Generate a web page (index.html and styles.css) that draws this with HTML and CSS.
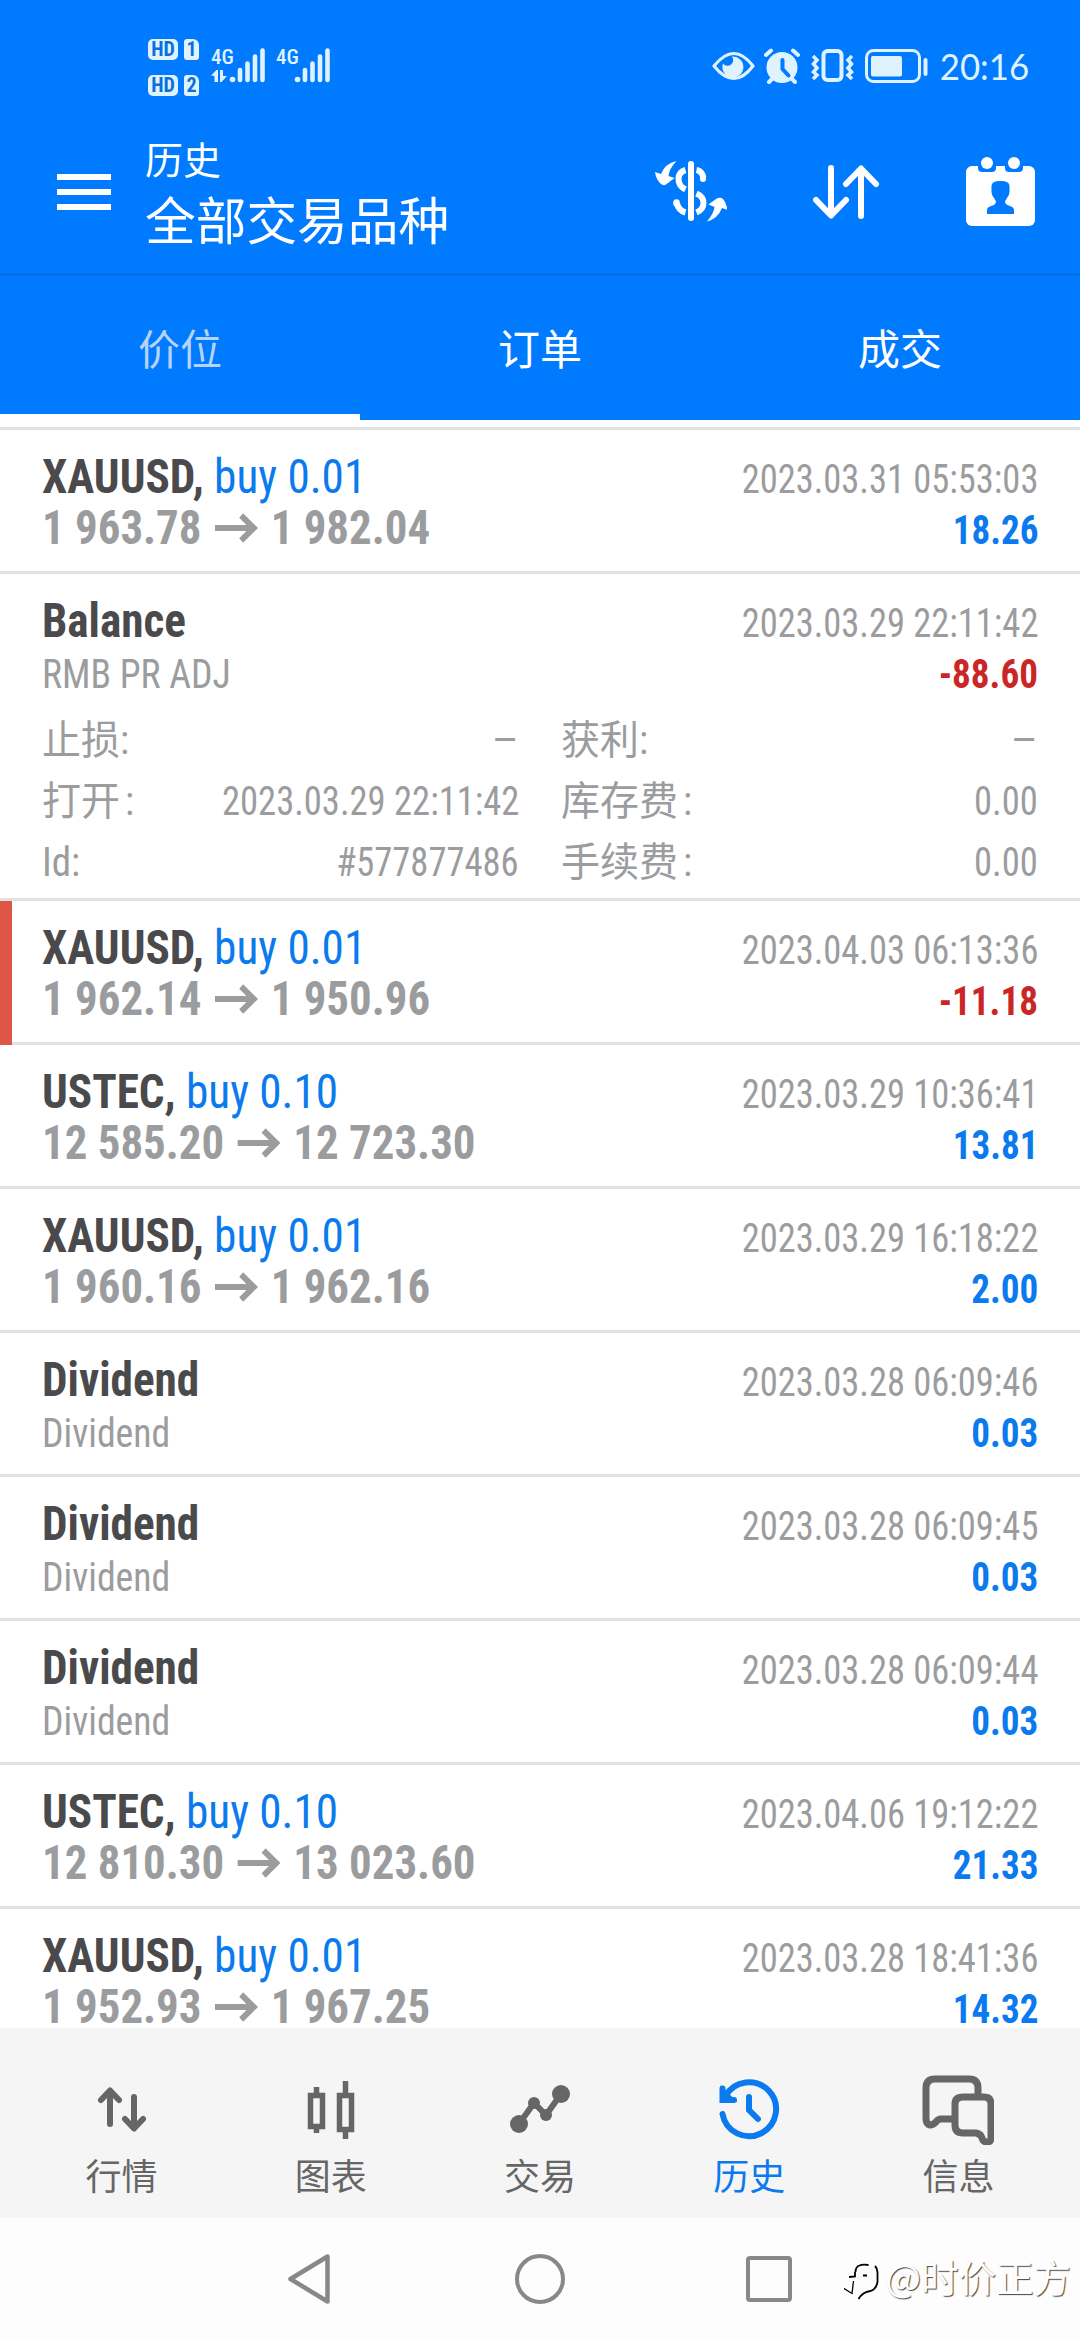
FILE: index.html
```html
<!DOCTYPE html>
<html lang="zh-CN">
<head>
<meta charset="utf-8">
<title>历史</title>
<link rel="stylesheet" href="styles.css">
</head>
<body>
<div class="screen">
  <header class="header">
    <div class="status">
      <div class="sims">
        <div class="sim"><span class="hd">HD</span><span class="slot">1</span></div>
        <div class="sim"><span class="hd">HD</span><span class="slot">2</span></div>
      </div>
      <div class="signal">
        <span class="net">4G</span>
        <svg width="56" height="36" viewBox="0 0 56 36"><g fill="#dff3ff"><path d="M0 27.500l5.500-5.500h1.500v12H3.500v-6zM9 22h3v6h4l-5.500 6H9z"/><circle cx="21.500" cy="31.500" r="2.800"/></g><path d="M29 22v10M36.500 15.500V32M44 8.500V32M51.500 2.500V32" stroke="#dff3ff" stroke-width="4.600" stroke-linecap="round"/></svg>
      </div>
      <div class="signal second">
        <span class="net">4G</span>
        <svg width="56" height="36" viewBox="0 0 56 36"><circle cx="21.500" cy="31.500" r="2.800" fill="#dff3ff"/><path d="M29 22v10M36.500 15.500V32M44 8.500V32M51.500 2.500V32" stroke="#dff3ff" stroke-width="4.600" stroke-linecap="round"/></svg>
      </div>
      <div class="indicators">
        <svg class="sys" width="220" height="36" viewBox="0 0 220 36" fill="none" stroke="#dff3ff">
          <path d="M2 18Q22-7 41 18Q22 43 2 18Z" stroke-width="3.200" stroke-linejoin="round"/>
          <path d="M20 8.500a10.500 10.500 0 1 1-9 7a5.500 5.500 0 0 0 9-7z" fill="#dff3ff" stroke="none"/>
          <circle cx="70" cy="19.500" r="15.500" fill="#dff3ff" stroke="none"/>
          <path d="M54 7l5-4.500M86 7l-5-4.500M60 31l-3 3M80 31l3 3" stroke-width="4" stroke-linecap="round"/>
          <path d="M70.500 12v9l6 6.500" stroke="#007aff" stroke-width="4" stroke-linecap="round"/>
          <rect x="111.500" y="3" width="18" height="29" rx="4" stroke-width="4"/>
          <path d="M101 8l4 4-3.500 4 3.500 4-3.500 4 3.500 3-4 4M140 8l-4 4 3.500 4-3.500 4 3.500 4-3.500 3 4 4" stroke-width="3.500"/>
          <rect x="154.500" y="2.500" width="53" height="31" rx="7" stroke-width="3"/>
          <rect x="159" y="8" width="31" height="20.500" rx="2" fill="#dff3ff" stroke="none"/>
          <path d="M213.500 12v14" stroke-width="4" stroke-linecap="round"/>
        </svg>
        <span class="clock">20:16</span>
      </div>
    </div>
    <div class="bar">
      <svg class="menu" width="54" height="36" viewBox="0 0 54 36" fill="#fff"><path d="M0 0h54v6H0zM0 15h54v6H0zM0 30h54v6H0z"/></svg>
      <div class="titles"><div class="subtitle">历史</div><div class="title">全部交易品种</div></div>
      <div class="actions">
        <svg width="72" height="61" viewBox="0 0 72 61" fill="none" stroke="#fff">
          <path d="M36 3v54" stroke-width="6" stroke-linecap="round"/>
          <path d="M30.500 9q-7 2-7 9t7 10.500M41.500 9q5.500 1 7 7.500" stroke-width="6"/><path d="M48 17v1" stroke-width="6" stroke-linecap="round"/>
          <path d="M41.500 32.500q7 3 7 9.500t-7 9.500M30.500 51.500q-7-2-8.500-9" stroke-width="6"/><path d="M21.500 42.500v-1" stroke-width="6.500" stroke-linecap="round"/>
          <path d="M21.500 0Q14 8 13.500 15L19.500 17L11 23.500Q8.500 25 6 23Q1 18.500 0 11L6 13Q10 2.500 21.500 0Z" fill="#fff" stroke="none"/>
          <path d="M52 60.500Q59 52 59.500 46L53.500 43.500L61 38Q65 35.500 68 38Q71.500 41.500 72.500 49L67 47Q63 57.500 52 60.500Z" fill="#fff" stroke="none"/>
        </svg>
        <svg class="sort" width="66" height="54" viewBox="0 0 66 54" fill="none" stroke="#fff" stroke-width="6" stroke-linecap="round" stroke-linejoin="round"><path d="M18 3v46M3 35l15 15.500L33 35M48 51V5M33 19L48 3.500 63 19"/></svg>
        <svg width="69" height="69" viewBox="0 0 69 69"><rect y="9" width="69" height="60" rx="6" fill="#fff"/><path d="M12 8h18v3q0 4-4 4H16q-4 0-4-4zM39 8h18v3q0 4-4 4H43q-4 0-4-4z" fill="#007aff"/><circle cx="21" cy="6" r="6" fill="#fff"/><circle cx="48" cy="6" r="6" fill="#fff"/><path d="M25.500 29q0-5 9-5t9 5v6q0 3-2.500 6l-2 3.500q0 3 5 4.500 4 1.500 4 4V57H21v-4q0-2.500 4-4 5-1.500 5-4.500L28 41q-2.500-3-2.500-6z" fill="#007aff"/></svg>
      </div>
    </div>
    <nav class="tabs"><a class="tab on">价位</a><a class="tab">订单</a><a class="tab">成交</a></nav>
  </header>

  <main class="list">
    <section class="row"><div class="line"><div class="name">XAUUSD, <span class="side">buy 0.01</span></div><time>2023.03.31 05:53:03</time></div><div class="line"><div class="price">1 963.78<svg class="arrow" viewBox="0 0 46 30"><path d="M0 15h41M28 2.500L41.500 15 28 27.500"/></svg>1 982.04</div><div class="sum">18.26</div></div></section>
    <section class="row"><div class="line"><div class="name">Balance</div><time>2023.03.29 22:11:42</time></div><div class="line"><div class="note">RMB PR ADJ</div><div class="sum loss">-88.60</div></div>
      <dl class="details">
        <div><dt>止损:</dt><dd class="dash">–</dd></div><div><dt>获利:</dt><dd class="dash">–</dd></div>
        <div><dt>打开<span class="colon">:</span></dt><dd>2023.03.29 22:11:42</dd></div><div><dt>库存费<span class="colon">:</span></dt><dd>0.00</dd></div>
        <div><dt>Id:</dt><dd>#577877486</dd></div><div><dt>手续费<span class="colon">:</span></dt><dd>0.00</dd></div>
      </dl></section>
    <section class="row marked"><div class="line"><div class="name">XAUUSD, <span class="side">buy 0.01</span></div><time>2023.04.03 06:13:36</time></div><div class="line"><div class="price">1 962.14<svg class="arrow" viewBox="0 0 46 30"><path d="M0 15h41M28 2.500L41.500 15 28 27.500"/></svg>1 950.96</div><div class="sum loss">-11.18</div></div></section>
    <section class="row"><div class="line"><div class="name">USTEC, <span class="side">buy 0.10</span></div><time>2023.03.29 10:36:41</time></div><div class="line"><div class="price">12 585.20<svg class="arrow" viewBox="0 0 46 30"><path d="M0 15h41M28 2.500L41.500 15 28 27.500"/></svg>12 723.30</div><div class="sum">13.81</div></div></section>
    <section class="row"><div class="line"><div class="name">XAUUSD, <span class="side">buy 0.01</span></div><time>2023.03.29 16:18:22</time></div><div class="line"><div class="price">1 960.16<svg class="arrow" viewBox="0 0 46 30"><path d="M0 15h41M28 2.500L41.500 15 28 27.500"/></svg>1 962.16</div><div class="sum">2.00</div></div></section>
    <section class="row"><div class="line"><div class="name">Dividend</div><time>2023.03.28 06:09:46</time></div><div class="line"><div class="note">Dividend</div><div class="sum">0.03</div></div></section>
    <section class="row"><div class="line"><div class="name">Dividend</div><time>2023.03.28 06:09:45</time></div><div class="line"><div class="note">Dividend</div><div class="sum">0.03</div></div></section>
    <section class="row"><div class="line"><div class="name">Dividend</div><time>2023.03.28 06:09:44</time></div><div class="line"><div class="note">Dividend</div><div class="sum">0.03</div></div></section>
    <section class="row"><div class="line"><div class="name">USTEC, <span class="side">buy 0.10</span></div><time>2023.04.06 19:12:22</time></div><div class="line"><div class="price">12 810.30<svg class="arrow" viewBox="0 0 46 30"><path d="M0 15h41M28 2.500L41.500 15 28 27.500"/></svg>13 023.60</div><div class="sum">21.33</div></div></section>
    <section class="row"><div class="line"><div class="name">XAUUSD, <span class="side">buy 0.01</span></div><time>2023.03.28 18:41:36</time></div><div class="line"><div class="price">1 952.93<svg class="arrow" viewBox="0 0 46 30"><path d="M0 15h41M28 2.500L41.500 15 28 27.500"/></svg>1 967.25</div><div class="sum">14.32</div></div></section>
  </main>

  <nav class="bottom">
    <a class="item"><svg width="72" height="72" viewBox="0 0 72 72" fill="none" stroke="#666" stroke-width="6" stroke-linecap="round" stroke-linejoin="round"><path d="M24 51V20M15 27l9-9.500L33 27M48 24v31M39 46l9 9.500L57 46"/></svg>行情</a>
    <a class="item"><svg width="72" height="72" viewBox="0 0 72 72" fill="none" stroke="#666" stroke-width="5.500"><path d="M15.500 22.500h12v31h-12zM44.500 22.500h12v34h-12zM21.500 14v8M21.500 54v6M50.500 8v14M50.500 57v9"/></svg>图表</a>
    <a class="item"><svg width="72" height="72" viewBox="0 0 72 72" fill="#666"><circle cx="15" cy="51" r="9"/><circle cx="57" cy="21" r="9"/><circle cx="30" cy="30" r="6"/><circle cx="42" cy="42" r="6"/><path d="M15 51L30 30l12 12L57 21" fill="none" stroke="#666" stroke-width="6"/></svg>交易</a>
    <a class="item active"><svg width="72" height="72" viewBox="0 0 72 72" fill="none" stroke="#0a7aee" stroke-width="6" stroke-linecap="round"><path d="M9.500 41A27 27 0 1 0 12.500 23M9.500 15.500v11.500H21M36 24v13l9 9"/><path d="M9.500 17v10h10z" fill="#0a7aee" stroke-width="4"/></svg>历史</a>
    <a class="item"><svg width="72" height="72" viewBox="0 0 72 72" fill="none" stroke="#666" stroke-width="7" stroke-linejoin="round"><path d="M32 46H19q-3 0-5 3-3 3-6 3-4-1-4-6V15q0-9 9-9h34q9 0 9 9v9M41 24h21q7 0 7 7v34q0 4-4 4t-5-4-6-5H41q-8 0-8-8V31q0-7 8-7z"/></svg>信息</a>
  </nav>

  <div class="sysnav">
    <svg class="back" width="44" height="52" viewBox="0 0 44 52" fill="none" stroke="#888" stroke-width="4.500" stroke-linejoin="round"><path d="M40.500 3.500v45L3.500 26z"/></svg>
    <span class="home"></span>
    <span class="recent"></span>
    <div class="watermark"><svg width="42" height="50" viewBox="0 0 42 50" fill="none" stroke="#000"><path d="M11.500 21q0-5 4-6.500 3-1.500 9-.500M5 26l6-.500V21M19 24.500h4" stroke-width="1.800"/><path d="M31 15q3 3 2.500 8v8q-1 7-7 9-8 1-12 8" stroke-width="1.800"/><path d="M9.500 30L8 42.500-1 37" stroke-width="1.300"/></svg><span>@时价正方</span></div>
  </div>
</div>
</body>
</html>
```
FILE: styles.css
```css
* { box-sizing: border-box; margin: 0; padding: 0; }

body {
  width: 1080px;
  background: #fdfdfd;
  font-family: "Roboto Condensed", "Noto Sans CJK SC", sans-serif;
}

svg { display: block; flex: none; }

.screen {
  display: flex;
  flex-direction: column;
  height: 2340px;
  overflow: hidden;
}

/* Header */
.header { background: #007aff; color: #fff; height: 420px; flex: none; }

.status {
  display: flex;
  align-items: flex-start;
  height: 120px;
  padding: 38px 51px 0 148px;
  color: #dff3ff;
}
.sims { display: flex; flex-direction: column; gap: 14px; width: 63px; }
.sim { display: flex; gap: 6px; height: 22px; align-items: center; }
.hd, .slot {
  background: #dff3ff;
  color: #0a6fe0;
  font-weight: 700;
  font-size: 20px;
  line-height: 21px;
  height: 21px;
  text-align: center;
}
.hd { width: 30px; border-radius: 5px; }
.slot { width: 15px; border-radius: 3px 6px 3px 3px; }
.signal { position: relative; width: 65px; padding-top: 10px; }
.net {
  position: absolute;
  left: 0;
  top: 9px;
  font-weight: 500;
  font-size: 21px;
  line-height: 20px;
}
.indicators { display: flex; margin-left: auto; align-items: center; gap: 2px; padding-top: 10px; }
.clock { font: 37px/36px Lato, sans-serif; transform: scaleX(.94); transform-origin: right; }

.bar {
  display: flex;
  align-items: center;
  height: 156px;
  padding: 0 45px 0 57px;
  border-bottom: 3px solid #006fe8;
}
.menu { margin-bottom: 9px; }
.titles { margin-left: 34px; padding-bottom: 17px; font-family: "Noto Sans CJK SC", sans-serif; }
.subtitle { font-size: 38px; line-height: 60px; }
.title { font-size: 50.700px; line-height: 61px; }
.actions { display: flex; align-items: center; margin-left: auto; padding-bottom: 10px; }
.sort { margin: 0 87px 0 86px; }

.tabs { display: flex; height: 144px; }
.tab {
  flex: 1;
  text-align: center;
  height: 144px;
  font: 42px/142px "Noto Sans CJK SC", sans-serif;
}
.tab.on { color: #b5d3f8; border-bottom: 6px solid #fff; }

/* Deal list */
.list {
  height: 1608px;
  flex: none;
  overflow: hidden;
  background: #fff;
  padding-top: 7px;
}
.list::before { content: ""; display: block; height: 3px; background: #e2e2e2; }
.row { padding: 21px 42px 0; min-height: 144px; border-bottom: 3px solid #e2e2e2; }
.row.marked { position: relative; }
.row.marked::before {
  content: "";
  position: absolute;
  left: 0;
  top: 0;
  bottom: -3px;
  width: 12px;
  background: #df5648;
}
.line {
  display: flex;
  align-items: baseline;
  height: 51px;
  line-height: 51px;
  white-space: nowrap;
}
/* keeps small and large text of a line on one baseline */
.line::before { content: "\200b"; width: 0; font-size: 48px; }
.name { font-size: 48px; font-weight: 700; color: #4a4a4c; transform: scaleX(.941); transform-origin: left; }
.side { font-weight: 400; color: #0a7aee; }
.price { font-size: 48px; font-weight: 700; color: #9b9c9e; transform: scaleX(.935); transform-origin: left; }
.arrow {
  display: inline-block;
  width: 46px;
  height: 30px;
  margin: 0 14px;
  vertical-align: 1px;
  fill: none;
  stroke: #9b9c9e;
  stroke-width: 6.200px;
}
time, .note, .details { font-size: 40px; color: #9b9c9e; }
time, .sum { margin-left: auto; transform: scaleX(.912); transform-origin: right; }
.note { transform: scaleX(.942); transform-origin: left; }
.sum { font-size: 40px; font-weight: 700; color: #0a7aee; transform: scaleX(.928); }
.sum.loss { color: #cb2626; }

.details {
  display: grid;
  grid-template-columns: 477px 477px;
  column-gap: 42px;
  padding: 13px 0 5px;
  line-height: 61px;
  white-space: nowrap;
}
.details > div { display: flex; justify-content: space-between; height: 61px; }
dt { transform: scaleX(.975); transform-origin: left; }
dd { transform: scaleX(.914); transform-origin: right; }
dd.dash { transform: scaleX(1.200); }
.colon { margin-left: 5px; }

/* App navigation */
.bottom {
  display: flex;
  height: 190px;
  flex: none;
  padding: 45px 17px 0;
  background: #f5f5f5;
}
.item {
  flex: 1;
  display: flex;
  flex-direction: column;
  align-items: center;
  color: #666;
  font: 36px/54px "Noto Sans CJK SC", sans-serif;
}
.item.active { color: #0a7aee; }
.item svg { margin-bottom: 2px; }

/* System navigation */
.sysnav {
  position: relative;
  display: flex;
  align-items: center;
  flex: 1;
  padding-left: 287px;
  background: #fdfdfd;
}
.home { width: 50px; height: 50px; margin-left: 184px; border: 4.500px solid #888; border-radius: 50%; }
.recent { width: 46px; height: 46px; margin-left: 181px; border: 4.500px solid #888; border-radius: 4px; }
.watermark {
  position: absolute;
  right: 9px;
  top: 30px;
  display: flex;
  align-items: center;
  color: #fff;
  font: 37.500px/56px "Noto Sans CJK SC", sans-serif;
  text-shadow: 1px 1px 1px #444;
}
```
